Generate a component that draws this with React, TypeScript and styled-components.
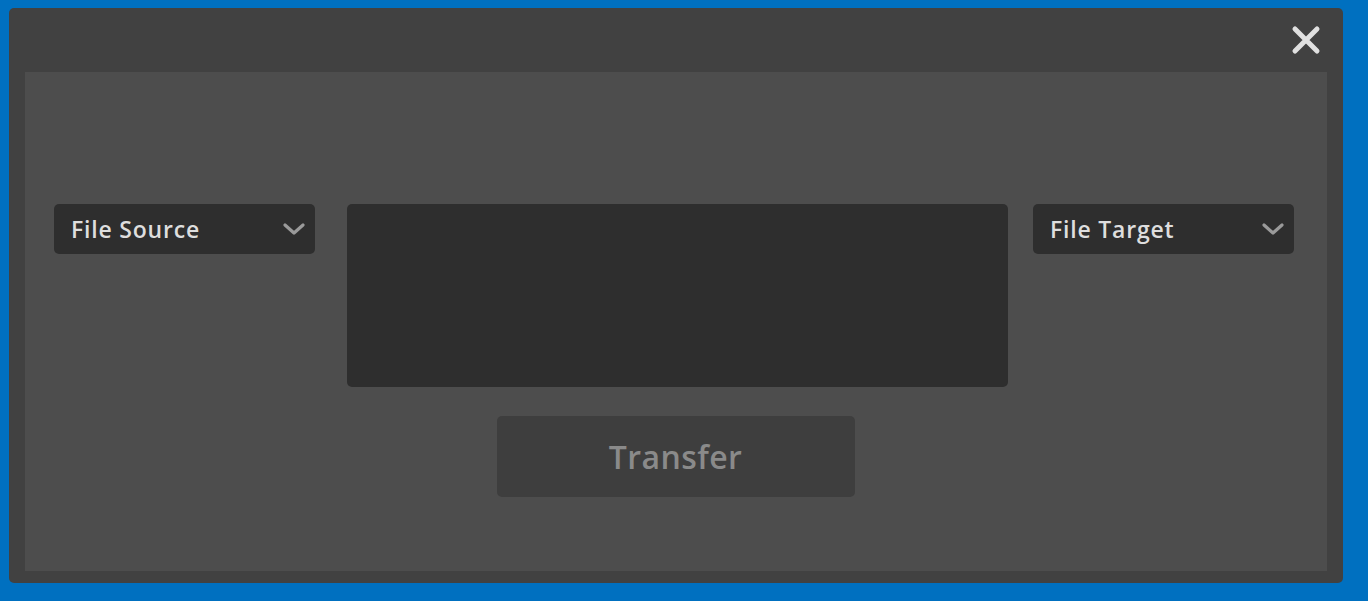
import React from "react";
import styled, { createGlobalStyle } from "styled-components";

const Global = createGlobalStyle`
  html, body { margin: 0; padding: 0; background: #0070c0; }
  body { font-family: "Open Sans", "Noto Sans", sans-serif; }
  #root { padding: 8px 25px 18px 9px; }
`;

const Dialog = styled.div`
  width: 1334px;
  height: 575px;
  box-sizing: border-box;
  background: #414141;
  border-radius: 5px;
  display: flex;
  flex-direction: column;
  padding: 0 16px 12px 16px;
`;

const Header = styled.div`
  height: 64px;
  display: flex;
  justify-content: flex-end;
  align-items: flex-start;
`;

const CloseButton = styled.button`
  width: 36px;
  height: 36px;
  margin-right: 3px;
  margin-top: 14px;
  background: none;
  border: none;
  padding: 0;
  display: flex;
  align-items: center;
  justify-content: center;
  cursor: pointer;
`;

const Body = styled.div`
  flex: 1;
  background: #4d4d4d;
  padding: 132px 33px 0 29px;
  display: flex;
  flex-direction: column;
  align-items: flex-start;
`;

const Row = styled.div`
  display: flex;
  align-items: flex-start;
`;

const Select = styled.div<{ $gap: number }>`
  width: 261px;
  height: 50px;
  box-sizing: border-box;
  background: #2e2e2e;
  border-radius: 5px;
  display: flex;
  align-items: center;
  justify-content: space-between;
  padding: 0 10px 0 17px;
  color: #dedede;
  font-size: 23px;
  font-weight: 600;
  letter-spacing: 0.8px;
  margin-right: ${(p) => p.$gap}px;
`;

const Center = styled.div`
  display: flex;
  flex-direction: column;
  align-items: center;
  margin-right: 25px;
`;

const TextBox = styled.div`
  width: 661px;
  height: 183px;
  background: #2e2e2e;
  border-radius: 5px;
`;

const TransferButton = styled.button`
  margin-top: 29px;
  margin-right: 4px;
  width: 358px;
  height: 81px;
  background: #3e3e3e;
  border: none;
  border-radius: 5px;
  color: #8a8a8a;
  font-family: "Open Sans", "Noto Sans", sans-serif;
  font-size: 32px;
  font-weight: 600;
  letter-spacing: 0.4px;
  padding: 0;
`;

const Chevron = () => (
  <svg width="22" height="14" viewBox="0 0 22 14">
    <path d="M2 3 L11 11 L20 3" fill="none" stroke="#9a9a9a" strokeWidth="3.2" strokeLinecap="round" strokeLinejoin="round" />
  </svg>
);

const CloseIcon = () => (
  <svg width="32" height="32" viewBox="0 0 32 32">
    <path d="M5 5 L27 27 M27 5 L5 27" stroke="#e0e0e0" strokeWidth="5" strokeLinecap="round" />
  </svg>
);

export default function App() {
  return (
    <>
      <Global />
      <Dialog>
        <Header>
          <CloseButton aria-label="Close">
            <CloseIcon />
          </CloseButton>
        </Header>
        <Body>
          <Row>
            <Select $gap={32}>
              <span>File Source</span>
              <Chevron />
            </Select>
            <Center>
              <TextBox />
              <TransferButton>Transfer</TransferButton>
            </Center>
            <Select $gap={0}>
              <span>File Target</span>
              <Chevron />
            </Select>
          </Row>
        </Body>
      </Dialog>
    </>
  );
}
